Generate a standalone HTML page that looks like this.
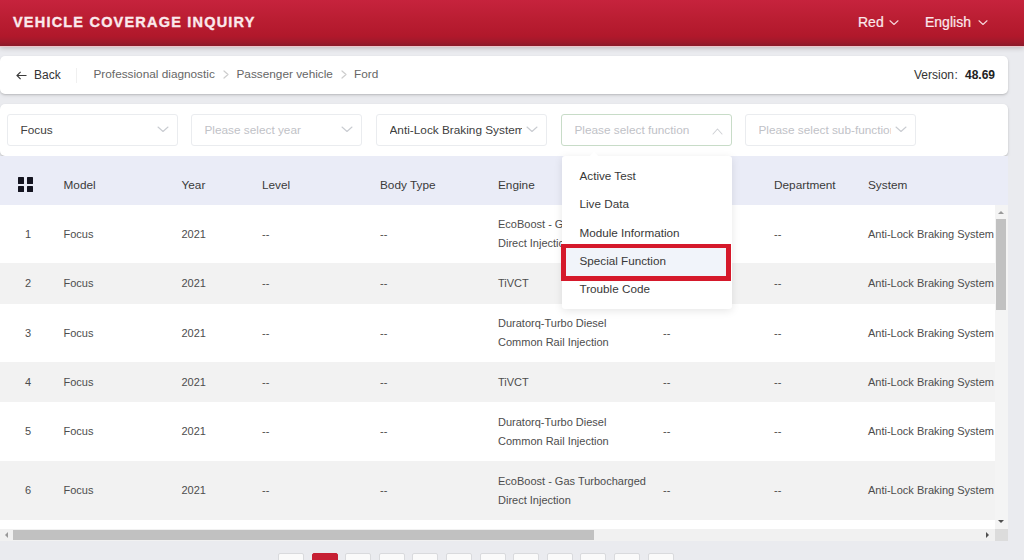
<!DOCTYPE html>
<html><head><meta charset="utf-8">
<style>
*{box-sizing:border-box;margin:0;padding:0}
html,body{width:1024px;height:560px;overflow:hidden;background:#eaebef;font-family:"Liberation Sans",sans-serif;color:#333}
.abs{position:absolute}
span.abs,.t{white-space:nowrap;line-height:1}
#hdr{position:absolute;left:0;top:0;width:1024px;height:46px;background:linear-gradient(#c6233d 0px,#bb1e33 18px,#b1182b 36px,#a0192b 42px,#8a1a2a 46px);box-shadow:0 2px 5px rgba(40,0,0,.22)}
.card{position:absolute;left:0;width:1008px;background:#fff;border-radius:5px;box-shadow:0 1px 2px rgba(0,0,0,.16),0 2px 4px rgba(0,0,0,.06)}
.sel{position:absolute;top:10px;width:171px;height:32px;border:1px solid #eaecef;border-radius:3px;background:#fff}
</style></head><body>

<div id="hdr">
<span class="abs" style="left:13px;top:14.5px;font-size:14.5px;font-weight:bold;color:#fbe9ec;letter-spacing:1.2px;-webkit-text-stroke:0.35px #fbe9ec">VEHICLE COVERAGE INQUIRY</span>
<span class="abs" style="left:858px;top:15px;font-size:14px;color:#fbe9ec;-webkit-text-stroke:0.2px #fbe9ec">Red</span>
<svg class="abs" style="left:889px;top:18.5px" width="10" height="7" viewBox="0 0 10 7"><path d="M1 1.75 L5.0 5.5 L9 1.75" fill="none" stroke="#f6d5da" stroke-width="1.1" stroke-linecap="round" stroke-linejoin="round"/></svg>
<span class="abs" style="left:925px;top:15px;font-size:14px;color:#fbe9ec;-webkit-text-stroke:0.2px #fbe9ec">English</span>
<svg class="abs" style="left:977.5px;top:18.5px" width="10" height="7" viewBox="0 0 10 7"><path d="M1 1.75 L5.0 5.5 L9 1.75" fill="none" stroke="#f6d5da" stroke-width="1.1" stroke-linecap="round" stroke-linejoin="round"/></svg>
</div>
<div class="abs" style="left:0;top:46px;width:1024px;height:1px;background:#ecc6cb"></div>
<div class="card" style="top:56px;height:38px">
<svg class="abs" style="left:16px;top:14.5px" width="11" height="9" viewBox="0 0 11 9"><path d="M10.5 4.5 H1 M4.6 0.9 L1 4.5 L4.6 8.1" fill="none" stroke="#3a3a3a" stroke-width="1.15"/></svg>
<span class="abs" style="left:34px;top:13px;font-size:12px;color:#333">Back</span>
<div class="abs" style="left:76px;top:12px;width:1px;height:15px;background:#f0f0f0"></div>
<span class="abs" style="left:93.5px;top:13px;font-size:11.8px;color:#666">Professional diagnostic</span>
<svg class="abs" style="left:222.5px;top:14px" width="6" height="9" viewBox="0 0 6 9"><path d="M1 1 L5 4.5 L1 8" fill="none" stroke="#cdcdcd" stroke-width="1.2" stroke-linecap="round" stroke-linejoin="round"/></svg>
<span class="abs" style="left:236.5px;top:13px;font-size:11.8px;color:#666">Passenger vehicle</span>
<svg class="abs" style="left:340.5px;top:14px" width="6" height="9" viewBox="0 0 6 9"><path d="M1 1 L5 4.5 L1 8" fill="none" stroke="#cdcdcd" stroke-width="1.2" stroke-linecap="round" stroke-linejoin="round"/></svg>
<span class="abs" style="left:354px;top:13px;font-size:11.8px;color:#666">Ford</span>
<span class="abs" style="left:914px;top:13px;font-size:12px;color:#333">Version</span>
<span class="abs" style="left:954.5px;top:13px;font-size:12px;color:#333">:</span>
<span class="abs" style="left:965px;top:13px;font-size:12px;color:#222;font-weight:bold">48.69</span>
</div>
<div class="card" style="top:104px;height:52px">
<div class="sel" style="left:7px;border-color:#eaecef">
<span class="abs" style="left:12.5px;top:10px;font-size:11.8px;color:#404040;">Focus</span>
<svg class="abs" style="left:149px;top:10px" width="12" height="8" viewBox="0 0 12 8"><path d="M1 2.0 L6.0 6.5 L11 2.0" fill="none" stroke="#c9ccd1" stroke-width="1.1" stroke-linecap="round" stroke-linejoin="round"/></svg>
</div>
<div class="sel" style="left:191px;border-color:#eaecef">
<span class="abs" style="left:12.5px;top:10px;font-size:11.8px;color:#bfc2c7;">Please select year</span>
<svg class="abs" style="left:149px;top:10px" width="12" height="8" viewBox="0 0 12 8"><path d="M1 2.0 L6.0 6.5 L11 2.0" fill="none" stroke="#c9ccd1" stroke-width="1.1" stroke-linecap="round" stroke-linejoin="round"/></svg>
</div>
<div class="sel" style="left:376px;border-color:#eaecef">
<span class="abs" style="left:12.5px;top:10px;font-size:11.8px;color:#404040;width:132px;overflow:hidden;">Anti-Lock Braking System</span>
<svg class="abs" style="left:149px;top:10px" width="12" height="8" viewBox="0 0 12 8"><path d="M1 2.0 L6.0 6.5 L11 2.0" fill="none" stroke="#c9ccd1" stroke-width="1.1" stroke-linecap="round" stroke-linejoin="round"/></svg>
</div>
<div class="sel" style="left:561px;border-color:#c8dcc8">
<span class="abs" style="left:12.5px;top:10px;font-size:11.8px;color:#bfc2c7;">Please select function</span>
<svg class="abs" style="left:150px;top:13px" width="11" height="7" viewBox="0 0 11 7"><path d="M1 6 L5.5 1 L10 6" fill="none" stroke="#cfd1d5" stroke-width="1.05" stroke-linecap="round" stroke-linejoin="round"/></svg>
</div>
<div class="sel" style="left:745px;border-color:#eaecef">
<span class="abs" style="left:12.5px;top:10px;font-size:11.8px;color:#bfc2c7;width:132px;overflow:hidden;">Please select sub-function</span>
<svg class="abs" style="left:149px;top:10px" width="12" height="8" viewBox="0 0 12 8"><path d="M1 2.0 L6.0 6.5 L11 2.0" fill="none" stroke="#c9ccd1" stroke-width="1.1" stroke-linecap="round" stroke-linejoin="round"/></svg>
</div>
</div>
<div class="abs" style="left:0;top:156px;width:1008px;height:385px;background:#fff;overflow:hidden">
<div class="abs" style="left:0;top:0;width:1008px;height:49px;background:#eaecf7">
<div class="abs" style="left:17.5px;top:21px;width:16px;height:16px"><div class="abs" style="left:0;top:0;width:6.5px;height:6.5px;background:#141420;border-radius:0.5px"></div><div class="abs" style="left:9px;top:0;width:6.5px;height:6.5px;background:#141420;border-radius:0.5px"></div><div class="abs" style="left:0;top:8.5px;width:6.5px;height:6.5px;background:#141420;border-radius:0.5px"></div><div class="abs" style="left:9px;top:8.5px;width:6.5px;height:6.5px;background:#141420;border-radius:0.5px"></div></div>
<span class="abs" style="left:63.5px;top:23.5px;font-size:11.8px;color:#3a3a3a">Model</span>
<span class="abs" style="left:181.5px;top:23.5px;font-size:11.8px;color:#3a3a3a">Year</span>
<span class="abs" style="left:262px;top:23.5px;font-size:11.8px;color:#3a3a3a">Level</span>
<span class="abs" style="left:380px;top:23.5px;font-size:11.8px;color:#3a3a3a">Body Type</span>
<span class="abs" style="left:498px;top:23.5px;font-size:11.8px;color:#3a3a3a">Engine</span>
<span class="abs" style="left:663px;top:23.5px;font-size:11.8px;color:#3a3a3a">Function</span>
<span class="abs" style="left:774px;top:23.5px;font-size:11.8px;color:#3a3a3a">Department</span>
<span class="abs" style="left:868px;top:23.5px;font-size:11.8px;color:#3a3a3a">System</span>
</div>
<div class="abs" style="left:0;top:49px;width:995px;height:58px;background:#fff">
<span class="abs" style="left:25px;top:23.8px;font-size:11px;color:#4d4d4d">1</span>
<span class="abs" style="left:63.5px;top:23.8px;font-size:11px;color:#4d4d4d">Focus</span>
<span class="abs" style="left:181.5px;top:23.8px;font-size:11px;color:#4d4d4d">2021</span>
<span class="abs" style="left:262px;top:23.8px;font-size:11px;color:#4d4d4d">--</span>
<span class="abs" style="left:380px;top:23.8px;font-size:11px;color:#4d4d4d">--</span>
<span class="abs" style="left:498px;top:14.3px;font-size:11px;color:#4d4d4d">EcoBoost - Gas Turbocharged</span>
<span class="abs" style="left:498px;top:33.3px;font-size:11px;color:#4d4d4d">Direct Injection</span>
<span class="abs" style="left:663px;top:23.8px;font-size:11px;color:#4d4d4d">--</span>
<span class="abs" style="left:774px;top:23.8px;font-size:11px;color:#4d4d4d">--</span>
<span class="abs" style="left:868px;top:23.8px;font-size:11px;color:#4d4d4d">Anti-Lock Braking System</span>
</div>
<div class="abs" style="left:0;top:107px;width:995px;height:41px;background:#f2f2f2">
<span class="abs" style="left:25px;top:15.3px;font-size:11px;color:#4d4d4d">2</span>
<span class="abs" style="left:63.5px;top:15.3px;font-size:11px;color:#4d4d4d">Focus</span>
<span class="abs" style="left:181.5px;top:15.3px;font-size:11px;color:#4d4d4d">2021</span>
<span class="abs" style="left:262px;top:15.3px;font-size:11px;color:#4d4d4d">--</span>
<span class="abs" style="left:380px;top:15.3px;font-size:11px;color:#4d4d4d">--</span>
<span class="abs" style="left:498px;top:15.3px;font-size:11px;color:#4d4d4d">TiVCT</span>
<span class="abs" style="left:663px;top:15.3px;font-size:11px;color:#4d4d4d">--</span>
<span class="abs" style="left:774px;top:15.3px;font-size:11px;color:#4d4d4d">--</span>
<span class="abs" style="left:868px;top:15.3px;font-size:11px;color:#4d4d4d">Anti-Lock Braking System</span>
</div>
<div class="abs" style="left:0;top:148px;width:995px;height:58px;background:#fff">
<span class="abs" style="left:25px;top:23.8px;font-size:11px;color:#4d4d4d">3</span>
<span class="abs" style="left:63.5px;top:23.8px;font-size:11px;color:#4d4d4d">Focus</span>
<span class="abs" style="left:181.5px;top:23.8px;font-size:11px;color:#4d4d4d">2021</span>
<span class="abs" style="left:262px;top:23.8px;font-size:11px;color:#4d4d4d">--</span>
<span class="abs" style="left:380px;top:23.8px;font-size:11px;color:#4d4d4d">--</span>
<span class="abs" style="left:498px;top:14.3px;font-size:11px;color:#4d4d4d">Duratorq-Turbo Diesel</span>
<span class="abs" style="left:498px;top:33.3px;font-size:11px;color:#4d4d4d">Common Rail Injection</span>
<span class="abs" style="left:663px;top:23.8px;font-size:11px;color:#4d4d4d">--</span>
<span class="abs" style="left:774px;top:23.8px;font-size:11px;color:#4d4d4d">--</span>
<span class="abs" style="left:868px;top:23.8px;font-size:11px;color:#4d4d4d">Anti-Lock Braking System</span>
</div>
<div class="abs" style="left:0;top:206px;width:995px;height:40px;background:#f2f2f2">
<span class="abs" style="left:25px;top:14.8px;font-size:11px;color:#4d4d4d">4</span>
<span class="abs" style="left:63.5px;top:14.8px;font-size:11px;color:#4d4d4d">Focus</span>
<span class="abs" style="left:181.5px;top:14.8px;font-size:11px;color:#4d4d4d">2021</span>
<span class="abs" style="left:262px;top:14.8px;font-size:11px;color:#4d4d4d">--</span>
<span class="abs" style="left:380px;top:14.8px;font-size:11px;color:#4d4d4d">--</span>
<span class="abs" style="left:498px;top:14.8px;font-size:11px;color:#4d4d4d">TiVCT</span>
<span class="abs" style="left:663px;top:14.8px;font-size:11px;color:#4d4d4d">--</span>
<span class="abs" style="left:774px;top:14.8px;font-size:11px;color:#4d4d4d">--</span>
<span class="abs" style="left:868px;top:14.8px;font-size:11px;color:#4d4d4d">Anti-Lock Braking System</span>
</div>
<div class="abs" style="left:0;top:246px;width:995px;height:59px;background:#fff">
<span class="abs" style="left:25px;top:24.3px;font-size:11px;color:#4d4d4d">5</span>
<span class="abs" style="left:63.5px;top:24.3px;font-size:11px;color:#4d4d4d">Focus</span>
<span class="abs" style="left:181.5px;top:24.3px;font-size:11px;color:#4d4d4d">2021</span>
<span class="abs" style="left:262px;top:24.3px;font-size:11px;color:#4d4d4d">--</span>
<span class="abs" style="left:380px;top:24.3px;font-size:11px;color:#4d4d4d">--</span>
<span class="abs" style="left:498px;top:14.8px;font-size:11px;color:#4d4d4d">Duratorq-Turbo Diesel</span>
<span class="abs" style="left:498px;top:33.8px;font-size:11px;color:#4d4d4d">Common Rail Injection</span>
<span class="abs" style="left:663px;top:24.3px;font-size:11px;color:#4d4d4d">--</span>
<span class="abs" style="left:774px;top:24.3px;font-size:11px;color:#4d4d4d">--</span>
<span class="abs" style="left:868px;top:24.3px;font-size:11px;color:#4d4d4d">Anti-Lock Braking System</span>
</div>
<div class="abs" style="left:0;top:305px;width:995px;height:59px;background:#f2f2f2">
<span class="abs" style="left:25px;top:24.3px;font-size:11px;color:#4d4d4d">6</span>
<span class="abs" style="left:63.5px;top:24.3px;font-size:11px;color:#4d4d4d">Focus</span>
<span class="abs" style="left:181.5px;top:24.3px;font-size:11px;color:#4d4d4d">2021</span>
<span class="abs" style="left:262px;top:24.3px;font-size:11px;color:#4d4d4d">--</span>
<span class="abs" style="left:380px;top:24.3px;font-size:11px;color:#4d4d4d">--</span>
<span class="abs" style="left:498px;top:14.8px;font-size:11px;color:#4d4d4d">EcoBoost - Gas Turbocharged</span>
<span class="abs" style="left:498px;top:33.8px;font-size:11px;color:#4d4d4d">Direct Injection</span>
<span class="abs" style="left:663px;top:24.3px;font-size:11px;color:#4d4d4d">--</span>
<span class="abs" style="left:774px;top:24.3px;font-size:11px;color:#4d4d4d">--</span>
<span class="abs" style="left:868px;top:24.3px;font-size:11px;color:#4d4d4d">Anti-Lock Braking System</span>
</div>
<div class="abs" style="left:0;top:364px;width:995px;height:9px;background:#fff"></div>
<div class="abs" style="left:995px;top:49px;width:13px;height:324px;background:#f4f4f4"></div>
<div class="abs" style="left:996px;top:63px;width:10px;height:91px;background:#c1c1c1"></div>
<div class="abs" style="left:998px;top:55px;width:0;height:0;border-left:3px solid transparent;border-right:3px solid transparent;border-bottom:3.5px solid #9a9a9a"></div>
<div class="abs" style="left:998px;top:364px;width:0;height:0;border-left:3px solid transparent;border-right:3px solid transparent;border-top:3.5px solid #505050"></div>
<div class="abs" style="left:0;top:373px;width:995px;height:12px;background:#f1f1f1"></div>
<div class="abs" style="left:13px;top:374px;width:581px;height:10px;background:#c1c1c1"></div>
<div class="abs" style="left:5px;top:376px;width:0;height:0;border-top:3px solid transparent;border-bottom:3px solid transparent;border-right:3.5px solid #9a9a9a"></div>
<div class="abs" style="left:986px;top:376px;width:0;height:0;border-top:3px solid transparent;border-bottom:3px solid transparent;border-left:3.5px solid #505050"></div>
<div class="abs" style="left:995px;top:373px;width:13px;height:12px;background:#dcdcdc"></div>
</div>
<div class="abs" style="left:561.5px;top:156px;width:170.5px;height:152.5px;background:#fff;border-radius:3px;box-shadow:0 2px 8px rgba(0,0,0,.10)">
<div class="abs" style="left:29px;top:-3px;width:6px;height:6px;background:#fff;transform:rotate(45deg)"></div>
<span class="abs" style="left:18px;top:14.2px;font-size:11.7px;color:#383838">Active Test</span>
<span class="abs" style="left:18px;top:42.4px;font-size:11.7px;color:#383838">Live Data</span>
<span class="abs" style="left:18px;top:70.6px;font-size:11.7px;color:#383838">Module Information</span>
<div class="abs" style="left:-1px;top:88px;width:170.5px;height:37px;border:5px solid #d5192b;border-top-width:4.5px;background:#f1f4fa"></div>
<span class="abs" style="left:18px;top:98.8px;font-size:11.7px;color:#383838">Special Function</span>
<span class="abs" style="left:18px;top:127.0px;font-size:11.7px;color:#383838">Trouble Code</span>
</div>
<div class="abs" style="left:278.0px;top:553px;width:26px;height:22px;background:#fafafa;border:1px solid #d9dadd;border-radius:2px;"></div>
<div class="abs" style="left:311.6px;top:553px;width:26px;height:22px;background:#fafafa;border:1px solid #d9dadd;border-radius:2px;background:#c61f33;border-color:#c61f33"></div>
<div class="abs" style="left:345.2px;top:553px;width:26px;height:22px;background:#fafafa;border:1px solid #d9dadd;border-radius:2px;"></div>
<div class="abs" style="left:378.8px;top:553px;width:26px;height:22px;background:#fafafa;border:1px solid #d9dadd;border-radius:2px;"></div>
<div class="abs" style="left:412.4px;top:553px;width:26px;height:22px;background:#fafafa;border:1px solid #d9dadd;border-radius:2px;"></div>
<div class="abs" style="left:446.0px;top:553px;width:26px;height:22px;background:#fafafa;border:1px solid #d9dadd;border-radius:2px;"></div>
<div class="abs" style="left:479.6px;top:553px;width:26px;height:22px;background:#fafafa;border:1px solid #d9dadd;border-radius:2px;"></div>
<div class="abs" style="left:513.2px;top:553px;width:26px;height:22px;background:#fafafa;border:1px solid #d9dadd;border-radius:2px;"></div>
<div class="abs" style="left:546.8px;top:553px;width:26px;height:22px;background:#fafafa;border:1px solid #d9dadd;border-radius:2px;"></div>
<div class="abs" style="left:580.4px;top:553px;width:26px;height:22px;background:#fafafa;border:1px solid #d9dadd;border-radius:2px;"></div>
<div class="abs" style="left:614.0px;top:553px;width:26px;height:22px;background:#fafafa;border:1px solid #d9dadd;border-radius:2px;"></div>
<div class="abs" style="left:647.6px;top:553px;width:26px;height:22px;background:#fafafa;border:1px solid #d9dadd;border-radius:2px;"></div>
</body></html>
